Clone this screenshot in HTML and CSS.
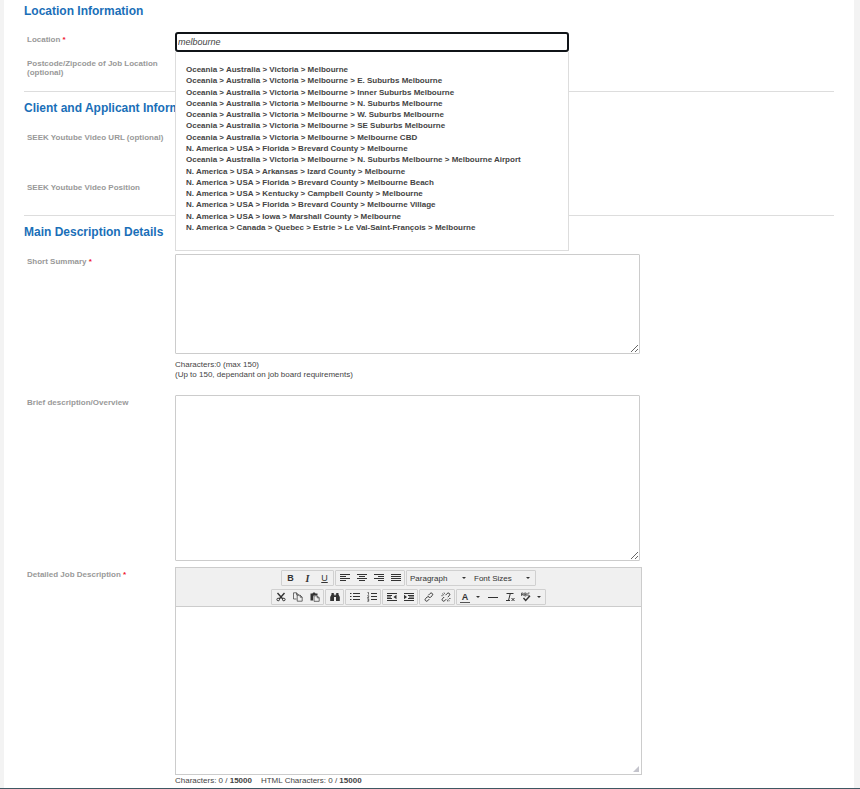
FILE: index.html
```html
<!DOCTYPE html>
<html lang="en">
<head>
  <meta charset="UTF-8">
  <meta name="viewport" content="width=device-width, initial-scale=1.0">
  <title>Job Posting</title>
  <link rel="stylesheet" href="styles.css">
</head>
<body>
  <form class="page">
    <section class="section section-location">
      <h2>Location Information</h2>
      <div class="row row-location">
        <label for="location">Location <span class="required">*</span></label>
        <div class="field autocomplete">
          <input type="text" id="location" class="location-input" value="melbourne" autocomplete="off">
          <ul class="suggestions">
            <li>Oceania &gt; Australia &gt; Victoria &gt; Melbourne</li>
            <li>Oceania &gt; Australia &gt; Victoria &gt; Melbourne &gt; E. Suburbs Melbourne</li>
            <li>Oceania &gt; Australia &gt; Victoria &gt; Melbourne &gt; Inner Suburbs Melbourne</li>
            <li>Oceania &gt; Australia &gt; Victoria &gt; Melbourne &gt; N. Suburbs Melbourne</li>
            <li>Oceania &gt; Australia &gt; Victoria &gt; Melbourne &gt; W. Suburbs Melbourne</li>
            <li>Oceania &gt; Australia &gt; Victoria &gt; Melbourne &gt; SE Suburbs Melbourne</li>
            <li>Oceania &gt; Australia &gt; Victoria &gt; Melbourne &gt; Melbourne CBD</li>
            <li>N. America &gt; USA &gt; Florida &gt; Brevard County &gt; Melbourne</li>
            <li>Oceania &gt; Australia &gt; Victoria &gt; Melbourne &gt; N. Suburbs Melbourne &gt; Melbourne Airport</li>
            <li>N. America &gt; USA &gt; Arkansas &gt; Izard County &gt; Melbourne</li>
            <li>N. America &gt; USA &gt; Florida &gt; Brevard County &gt; Melbourne Beach</li>
            <li>N. America &gt; USA &gt; Kentucky &gt; Campbell County &gt; Melbourne</li>
            <li>N. America &gt; USA &gt; Florida &gt; Brevard County &gt; Melbourne Village</li>
            <li>N. America &gt; USA &gt; Iowa &gt; Marshall County &gt; Melbourne</li>
            <li>N. America &gt; Canada &gt; Quebec &gt; Estrie &gt; Le Val-Saint-François &gt; Melbourne</li>
          </ul>
        </div>
      </div>
      <div class="row row-postcode">
        <span class="label">Postcode/Zipcode of Job Location (optional)</span>
      </div>
    </section>

    <section class="section section-client">
      <h2>Client and Applicant Information</h2>
      <div class="row row-video">
        <span class="label">SEEK Youtube Video URL (optional)</span>
      </div>
      <div class="row row-position">
        <span class="label">SEEK Youtube Video Position</span>
      </div>
    </section>

    <section class="section section-main">
      <h2>Main Description Details</h2>
      <div class="row row-summary">
        <label for="summary">Short Summary <span class="required">*</span></label>
        <div class="field">
          <textarea id="summary" class="text-area short"></textarea>
          <p class="hint">Characters:0 (max 150)<br>(Up to 150, dependant on job board requirements)</p>
        </div>
      </div>
      <div class="row row-overview">
        <label for="overview">Brief description/Overview</label>
        <div class="field">
          <textarea id="overview" class="text-area tall"></textarea>
        </div>
      </div>
      <div class="row">
        <label for="description">Detailed Job Description <span class="required">*</span></label>
        <div class="field">
          <div class="editor">
            <div class="toolbar">
              <div class="toolbar-row">
                <div class="group">
                  <button type="button" class="letter bold" aria-label="Bold">B</button>
                  <button type="button" class="letter italic" aria-label="Italic">I</button>
                  <button type="button" class="letter underline" aria-label="Underline">U</button>
                </div>
                <div class="group">
                  <button type="button" aria-label="Align left"><svg viewBox="0 0 10 10"><path class="lines" d="M0 1.500h10M0 3.500h6M0 5.500h10M0 7.500h6"/></svg></button>
                  <button type="button" aria-label="Align center"><svg viewBox="0 0 10 10"><path class="lines" d="M0 1.500h10M2 3.500h6M0 5.500h10M2 7.500h6"/></svg></button>
                  <button type="button" aria-label="Align right"><svg viewBox="0 0 10 10"><path class="lines" d="M0 1.500h10M4 3.500h6M0 5.500h10M4 7.500h6"/></svg></button>
                  <button type="button" aria-label="Justify"><svg viewBox="0 0 10 10"><path class="lines" d="M0 1.500h10M0 3.500h10M0 5.500h10M0 7.500h10"/></svg></button>
                </div>
                <div class="group">
                  <select aria-label="Block format"><option>Paragraph</option></select>
                  <select aria-label="Font size"><option>Font Sizes</option></select>
                </div>
              </div>
              <div class="toolbar-row">
                <div class="group">
                  <button type="button" aria-label="Cut"><svg viewBox="0 0 10 10"><path class="heavy" d="M1.500 1l5.300 6M8.500 1L3.200 7"/><circle cx="2.200" cy="7.500" r="1.300"/><circle cx="7.800" cy="7.500" r="1.300"/></svg></button>
                  <button type="button" aria-label="Copy"><svg viewBox="0 0 10 10"><path class="thin" d="M3.500 7H.5V.8h3l2 2M3.500.8v2h2M4.200 3.200h3l2 2v4h-5zM7.200 3.200v2h2"/></svg></button>
                  <button type="button" aria-label="Paste"><svg viewBox="0 0 10 10"><path class="fill" d="M.5 1.500h2c0-1.500 3-1.500 3 0h2v1.700H4L3 4.500v4H.5z"/><path class="thin" d="M4 3.800h3.200l2 2v3.500H4zM7.200 3.800v2h2"/></svg></button>
                </div>
                <div class="group">
                  <button type="button" aria-label="Find and replace"><svg viewBox="0 0 10 10"><path class="fill" d="M1.500 1h2.300v1.500h.7v1h1v-1h.7V1h2.300v1.500L9.800 5v4H6V5H4v4H.2V5l1.300-2.500z"/></svg></button>
                </div>
                <div class="group">
                  <button type="button" aria-label="Bullet list"><svg viewBox="0 0 10 10"><path d="M0 1.500h1.500M3 1.500h7M0 4.500h1.500M3 4.500h7M0 7.500h1.500M3 7.500h7"/></svg></button>
                  <button type="button" aria-label="Numbered list"><svg viewBox="0 0 10 10"><path d="M4 1.500h6M4 4.500h6M4 7.500h6"/><path class="thin" d="M.5.5h1v2.200M.3 3.700h1.400v1L.5 5.500h1.400M.3 6.700h1.400v2.600H.3M.5 8h1.200"/></svg></button>
                </div>
                <div class="group">
                  <button type="button" aria-label="Decrease indent"><svg viewBox="0 0 10 10"><path d="M0 1.500h10M0 8.500h10M0 3.500h5M0 5h4M0 6.500h5"/><path class="fill" d="M9.500 2.700v4.600L6.500 5z"/></svg></button>
                  <button type="button" aria-label="Increase indent"><svg viewBox="0 0 10 10"><path d="M0 1.500h10M0 8.500h10M4 3.500h6M5 5h5M4 6.500h6"/><path class="fill" d="M0 2.700v4.600L3 5z"/></svg></button>
                </div>
                <div class="group">
                  <button type="button" aria-label="Insert link"><svg viewBox="0 0 10 10"><path d="M4.300 3.300l1.800-1.800c1.400-1.400 3.500.6 2.200 2L6.700 5.100c-.6.600-1.600.5-2.100 0M5.300 5c-.5-.6-1.500-.6-2.100 0L1.500 6.700c-1.300 1.300.8 3.400 2.100 2.100l1.700-1.700"/></svg></button>
                  <button type="button" aria-label="Remove link"><svg viewBox="0 0 10 10"><path d="M4.500 3.200l1.700-1.700c1.400-1.400 3.500.6 2.200 2L6.800 5M3.200 5L1.500 6.700c-1.300 1.300.8 3.400 2.100 2.100l1.600-1.600"/><path class="thin" d="M1 1.500l2 1.700M3 .5l.6 1.500M.3 3.700h1.500M6.700 7.200l2 1.700M8 6.500h1.600M6.300 8l.6 1.600"/></svg></button>
                </div>
                <div class="group">
                  <button type="button" class="with-arrow" aria-label="Text color"><span class="color-letter">A</span><i class="arrow"></i></button>
                  <button type="button" aria-label="Horizontal line"><svg viewBox="0 0 10 10"><path d="M0 5.500h10"/></svg></button>
                  <button type="button" aria-label="Clear formatting"><svg viewBox="0 0 10 10"><path d="M1.500 1.500h7M5.300 1.500L3.500 8.500M1 8.500h4"/><path d="M6.500 6l3 3M9.500 6l-3 3"/></svg></button>
                  <button type="button" class="with-arrow" aria-label="Spellcheck"><svg viewBox="0 0 10 10"><path class="thin" d="M.5 4V1h1.700v3M.5 2.500h1.700M3.700.8V4h1.500V1H3.700M3.700 2.500h1.500M8.600 1H6.900v3h1.700"/><path class="heavy" d="M2.500 6l2.200 2.500L9 3.800"/></svg><i class="arrow"></i></button>
                </div>
              </div>
            </div>
            <textarea id="description" class="editor-body"></textarea>
            <svg class="grip" viewBox="0 0 6 6"><path d="M6 0v6H0z"/></svg>
          </div>
          <p class="counts"><span>Characters: 0 / <b>15000</b></span><span>HTML Characters: 0 / <b>15000</b></span></p>
        </div>
      </div>
    </section>
  </form>
</body>
</html>
```

FILE: styles.css
```css
* {
  box-sizing: border-box;
}

body {
  margin: 0;
  background: #f3f3f3;
  border-bottom: 1px solid #3f5863;
  font-family: "Liberation Sans", Arial, sans-serif;
  font-size: 8px;
  color: #444;
}

.page {
  margin: 0 6px 0 4px;
  padding: 3px 20px 2px;
  background: white;
}

.section {
  border-bottom: 1px solid #ddd;
}

.section-location {
  height: 89px;
}

.section-client {
  height: 124px;
  padding-top: 8px;
}

.section-main {
  padding-top: 8px;
  border-bottom: none;
}

h2 {
  margin: 0;
  font-size: 12px;
  line-height: 16px;
  color: #1a6fb8;
}

.row {
  display: grid;
  grid-template-columns: 151px minmax(0, 1fr);
}

label,
.label {
  padding: 3px 8px 0 3px;
  font-weight: bold;
  line-height: 9px;
  color: #999;
}

.required {
  color: #f0142f;
}

.row-location {
  padding-top: 13px;
}

.row-postcode {
  padding-top: 4px;
}

.row-video {
  padding-top: 14px;
}

.row-position {
  padding-top: 38px;
}

.row-summary {
  padding-top: 14px;
}

.row-overview {
  padding: 15px 0 6px;
}

.autocomplete {
  position: relative;
  max-width: 394px;
}

.location-input {
  display: block;
  width: 100%;
  height: 20px;
  padding: 0 1px;
  border: 2px solid #101418;
  border-radius: 3px;
  outline: none;
  font: italic 9px "Liberation Sans", Arial, sans-serif;
  color: #444;
}

.suggestions {
  display: flex;
  flex-direction: column;
  justify-content: space-between;
  position: absolute;
  top: 20px;
  left: 0;
  z-index: 1;
  width: 100%;
  height: 199px;
  margin: 0;
  padding: 12px 10px 17px;
  list-style: none;
  background: white;
  border: 1px solid #ddd;
  border-top: none;
  font-weight: bold;
  line-height: 11px;
}

.text-area {
  display: block;
  width: 100%;
  max-width: 465px;
  border: 1px solid #ccc;
  border-radius: 1px;
  outline: none;
}

.short {
  height: 100px;
}

.tall {
  height: 166px;
}

.hint {
  margin: 6px 0 0;
  line-height: 10px;
}

.editor {
  position: relative;
  max-width: 467px;
  border: 1px solid #ccc;
}

.toolbar {
  display: flex;
  flex-direction: column;
  gap: 3px;
  padding: 2px 0 1px;
  background: #f0f0f0;
  border-bottom: 1px solid #ccc;
}

.toolbar-row {
  display: flex;
  justify-content: center;
  gap: 1px;
}

.group {
  display: flex;
  height: 16px;
  border: 1px solid #d0d0d0;
  border-radius: 1px;
}

.group button {
  display: flex;
  align-items: center;
  justify-content: center;
  width: 17px;
  padding: 0;
  border: none;
  background: none;
  font: 9px "Liberation Sans", Arial, sans-serif;
  color: #333;
}

.group .with-arrow {
  justify-content: flex-start;
  gap: 6px;
  width: 27px;
  padding-left: 3px;
}

.group .bold {
  font-weight: bold;
}

.group .italic {
  font-family: "Liberation Serif", serif;
  font-size: 10px;
  font-style: italic;
  font-weight: bold;
}

.group .underline {
  text-decoration: underline;
}

.color-letter {
  width: 10px;
  line-height: 10px;
  font-weight: bold;
  text-align: center;
  border-bottom: 1px solid #555;
}

.arrow {
  border: 2px solid transparent;
  border-top-color: #333;
  border-bottom: none;
}

.group svg {
  width: 10px;
  height: 10px;
  flex: none;
  fill: none;
  stroke: #333;
  stroke-width: 1;
}

.group .thin {
  stroke-width: 0.7;
}

.group .lines {
  stroke-width: 1.2;
}

.group .heavy {
  stroke-width: 1.4;
}

.group .fill {
  fill: #333;
  stroke: none;
}

.group select {
  width: 64px;
  padding: 0 0 0 3px;
  border: none;
  appearance: none;
  background: url("data:image/svg+xml,%3Csvg xmlns='http://www.w3.org/2000/svg' width='4' height='2'%3E%3Cpath d='M0 0h4L2 2z' fill='%23333'/%3E%3C/svg%3E") no-repeat right 5px center;
  font: 8px "Liberation Sans", Arial, sans-serif;
  color: #333;
}

.editor-body {
  display: block;
  width: 100%;
  height: 167px;
  border: none;
  outline: none;
  resize: none;
}

.grip {
  position: absolute;
  right: 2px;
  bottom: 2px;
  width: 6px;
  height: 6px;
  fill: #c4c4cc;
}

.counts {
  display: flex;
  gap: 9px;
  margin: 1px 0 0;
  line-height: 10px;
}
```
